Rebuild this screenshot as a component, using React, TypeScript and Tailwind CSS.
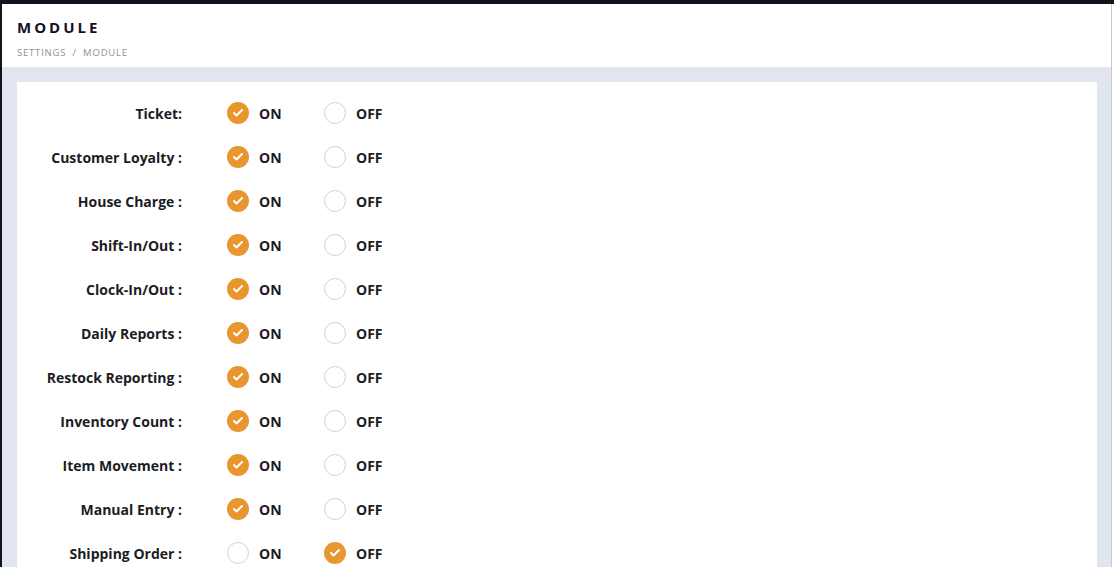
import { Check } from "lucide-react";

const modules: { name: string; on: boolean }[] = [
  { name: "Ticket:", on: true },
  { name: "Customer Loyalty :", on: true },
  { name: "House Charge :", on: true },
  { name: "Shift-In/Out :", on: true },
  { name: "Clock-In/Out :", on: true },
  { name: "Daily Reports :", on: true },
  { name: "Restock Reporting :", on: true },
  { name: "Inventory Count :", on: true },
  { name: "Item Movement :", on: true },
  { name: "Manual Entry :", on: true },
  { name: "Shipping Order :", on: false },
];

function Radio({ checked }: { checked: boolean }) {
  return checked ? (
    <span className="flex h-[22px] w-[22px] shrink-0 items-center justify-center rounded-full bg-[#e8962f]">
      <Check className="h-[12px] w-[12px] text-white" strokeWidth={4} />
    </span>
  ) : (
    <span className="h-[22px] w-[22px] shrink-0 rounded-full border border-[#d6d3cf] bg-white" />
  );
}

export default function App() {
  return (
    <div
      className="flex h-[567px] w-[1114px] overflow-hidden bg-[#15121f] pl-[2px] pt-[4px]"
      style={{ fontFamily: '"Open Sans", "Liberation Sans", sans-serif' }}
    >
      <div className="flex w-[1109px] flex-col bg-[#e1e5ef]">
        {/* HEADER */}
        <div className="h-[63px] shrink-0 bg-white px-[15px] pt-[13px]">
          <h1 className="text-[15px] leading-[20px] font-bold tracking-[3px] text-[#15121f]">
            MODULE
          </h1>
          <p className="mt-[10px] text-[9.5px] leading-[12px] tracking-[0.8px] text-[#8c8f9c]">
            SETTINGS <span className="mx-[3px]">/</span> MODULE
          </p>
        </div>

        {/* CARD */}
        <div className="flex-1 pl-[15px] pr-[14px] pt-[15px]">
          <div className="h-full bg-white pt-[9px]">
            {modules.map((m) => (
              <div key={m.name} className="flex h-[44px] items-center">
                <div className="w-[165px] text-right text-[14px] font-bold text-[#1c1c24]">
                  {m.name}
                </div>
                <div className="ml-[45px] flex items-center">
                  <Radio checked={m.on} />
                  <span className="ml-[10px] w-[65px] text-[14px] font-bold text-[#1c1c24]">
                    ON
                  </span>
                  <Radio checked={!m.on} />
                  <span className="ml-[10px] text-[14px] font-bold text-[#1c1c24]">
                    OFF
                  </span>
                </div>
              </div>
            ))}
          </div>
        </div>
      </div>
      <div className="w-[1px] bg-[#c8c8cc]" />
      <div className="flex-1 bg-white" />
    </div>
  );
}
